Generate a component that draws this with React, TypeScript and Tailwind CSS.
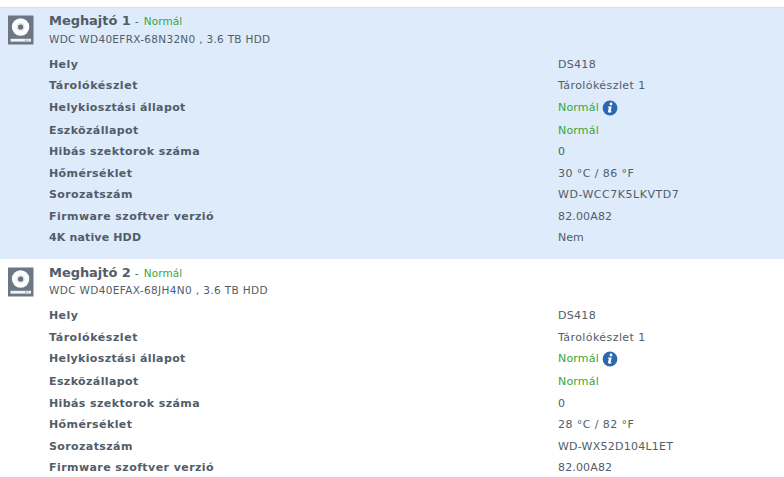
type Row = { label: string; value: string; labelSpacing?: string; valueSpacing?: string; green?: boolean; info?: boolean };

function DiskIcon() {
  return (
    <svg width="26" height="30" viewBox="0 0 26 30" className="block shrink-0">
      <rect x="0" y="0.5" width="25.5" height="29" rx="0.6" fill="#6b7784" />
      <circle cx="12.6" cy="12" r="8.7" fill="#fbfdff" />
      <circle cx="12.6" cy="12" r="4" fill="#e1e6eb" />
      <circle cx="12.6" cy="12" r="2.6" fill="#65717d" />
      <rect x="2.5" y="23.8" width="20.5" height="2.8" fill="#f2f5f8" />
      <rect x="17" y="24.6" width="1.3" height="1.2" fill="#7d8994" />
      <rect x="19.5" y="24.6" width="1.3" height="1.2" fill="#a8b1b9" />
    </svg>
  );
}

function InfoIcon() {
  return (
    <svg width="16" height="16" viewBox="0 0 16 16" className="block">
      <circle cx="8" cy="8" r="7.4" fill="#2c67b2" />
      <circle cx="9" cy="4" r="1.4" fill="#fff" />
      <path d="M6.1 6.4h3.6L8.6 11.2h1l-.3 1.1c-2 .8-3.6.5-3.2-1.3l.8-3.5h-1z" fill="#fff" />
    </svg>
  );
}

type DriveProps = { name: string; model: string; modelSpacing: string; rows: Row[]; heights: string[]; className: string; iconClass: string; titleClass: string };

function Drive({ name, model, modelSpacing, rows, heights, className, iconClass, titleClass }: DriveProps) {
  return (
    <section className={className}>
      <header className="flex h-[49px] pl-[7.5px]">
        <div className={"w-[41.5px] " + iconClass}><DiskIcon /></div>
        <div>
          <div className={"text-[11px] leading-[18px] whitespace-pre " + titleClass}><b className="text-[13px] tracking-[-0.05px]">{name}</b><span className="ml-1 mr-[5px]">-</span><span className="text-[10.5px] tracking-[0.1px] text-[#3da439]">Normál</span></div>
          <div className={"h-[20px] text-[10.5px] leading-[20px] " + modelSpacing}>{model}</div>
        </div>
      </header>
      {rows.map((r, i) => (
        <div key={r.label} className={"flex items-start pl-[49px] leading-4 " + heights[i]}>
          <div className={"w-[509px] font-bold " + (r.labelSpacing ?? "tracking-[0.4px]")}>{r.label}</div>
          <div className={"flex items-center gap-[3px] " + (r.valueSpacing ?? "tracking-[0.42px]") + (r.green ? " text-[#3da439]" : "")}>{r.value}{r.info && <InfoIcon />}</div>
        </div>
      ))}
    </section>
  );
}

const makeRows = (temp: string, serial: string, serialSpacing: string): Row[] => [
  { label: "Hely", value: "DS418", valueSpacing: "tracking-[0.3px]" },
  { label: "Tárolókészlet", value: "Tárolókészlet 1", labelSpacing: "tracking-[0.56px]" },
  { label: "Helykiosztási állapot", value: "Normál", labelSpacing: "tracking-[0.36px]", valueSpacing: "tracking-[0.18px]", green: true, info: true },
  { label: "Eszközállapot", value: "Normál", valueSpacing: "tracking-[0.18px]", green: true },
  { label: "Hibás szektorok száma", value: "0" },
  { label: "Hőmérséklet", value: temp },
  { label: "Sorozatszám", value: serial, valueSpacing: serialSpacing },
  { label: "Firmware szoftver verzió", value: "82.00A82", labelSpacing: "tracking-[0.43px]", valueSpacing: "tracking-[0.15px]" },
];

const firstHeights = ["h-[21px]", "h-[22px]", "h-[23px]", "h-[21px]", "h-[22px]", "h-[21px]", "h-[22px]", "h-[21px]", "h-[21px]"];
const secondHeights = ["h-[22px]", "h-[21px]", "h-[23px]", "h-[22px]", "h-[21px]", "h-[22px]", "h-[21px]", "h-[21px]"];

export default function App() {
  return (
    <main className="h-[477px] w-[784px] overflow-hidden bg-white pt-[7px] font-['DejaVu_Sans',Verdana,sans-serif] text-[11px] text-[#515d69]">
      <Drive className="h-[252px] border-t border-[#d3dfeb] bg-[#deebfb]" iconClass="pt-[7px]" titleClass="mt-[4px] h-[17px]" heights={firstHeights} name="Meghajtó 1" model="WDC WD40EFRX-68N32N0 , 3.6 TB HDD" modelSpacing="tracking-[0.3px]" rows={[...makeRows("30 °C / 86 °F", "WD-WCC7K5LKVTD7", "tracking-[0.52px]"), { label: "4K native HDD", value: "Nem", labelSpacing: "tracking-[0.15px]", valueSpacing: "tracking-[0.05px]" }]} />
      <Drive className="h-[251px]" iconClass="pt-[7.5px]" titleClass="mt-[5px] h-[16px]" heights={secondHeights} name="Meghajtó 2" model="WDC WD40EFAX-68JH4N0 , 3.6 TB HDD" modelSpacing="tracking-[0.36px]" rows={makeRows("28 °C / 82 °F", "WD-WX52D104L1ET", "tracking-[0.24px]")} />
    </main>
  );
}
